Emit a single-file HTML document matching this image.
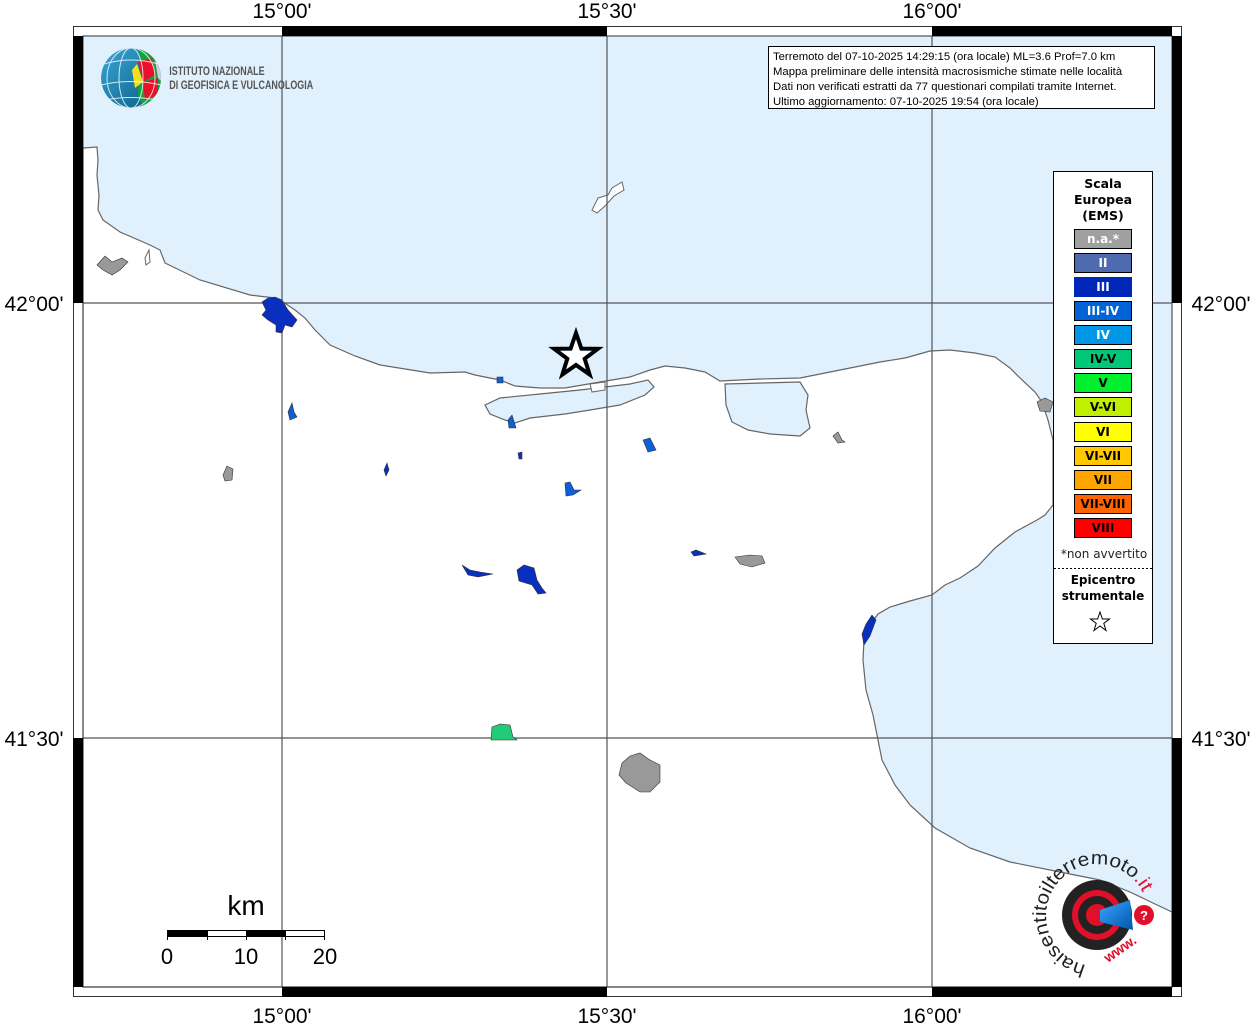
<!DOCTYPE html>
<html><head><meta charset="utf-8"><style>
html,body{margin:0;padding:0;background:#fff;}
svg{display:block;}
text{font-family:"Liberation Sans","DejaVu Sans",sans-serif;}
</style></head><body>
<svg width="1255" height="1024" viewBox="0 0 1255 1024" xmlns="http://www.w3.org/2000/svg">
<rect x="0" y="0" width="1255" height="1024" fill="#fff"/>
<rect x="83" y="36" width="1089" height="951" fill="#e0f1fd"/>
<path d="M83,148 L97,147 L98,160 L97,175 L99,195 L98,210 L103,220 L120,232 L150,245 L160,250 L165,263 L200,280 L250,295 L275,298 L283,302 L295,310 L305,318 L315,330 L330,345 L355,356 L380,365 L430,373 L465,372 L475,375 L500,380 L515,386 L540,388 L565,388 L600,382 L630,377 L650,370 L665,366 L685,368 L705,372 L720,381 L760,379 L800,378 L815,375 L840,370 L880,362 L905,358 L930,351 L950,350 L975,353 L995,357 L1010,368 L1020,378 L1035,392 L1042,402 L1048,420 L1053,440 L1053,505 L1045,515 L1037,520 L1015,532 L995,548 L978,566 L960,578 L945,585 L932,595 L910,601 L890,607 L878,614 L870,625 L864,640 L863,660 L866,690 L873,715 L882,760 L895,785 L910,805 L935,828 L970,848 L1010,862 L1060,872 L1100,880 L1130,892 L1155,904 L1172,912 L1172,987 L83,987 Z" fill="#fff" stroke="#666" stroke-width="1.2"/>
<path d="M500,398 L540,394 L580,390 L630,384 L648,380 L654,387 L645,395 L620,405 L590,410 L565,414 L530,418 L515,423 L505,420 L490,414 L485,405 Z" fill="#e0f1fd" stroke="#666" stroke-width="1.2"/>
<path d="M725,384 L800,382 L808,395 L806,410 L810,428 L800,436 L770,434 L748,430 L732,422 L726,405 Z" fill="#e0f1fd" stroke="#666" stroke-width="1.2"/>
<path d="M590,384 L605,382 L605,390 L592,392 Z" fill="#fff" stroke="#666" stroke-width="1"/>
<path d="M598,198 L608,195 L612,188 L622,182 L624,190 L614,196 L605,206 L597,213 L592,210 Z" fill="#fff" stroke="#666" stroke-width="1"/>
<path d="M145,258 L149,250 L150,262 L146,265 Z" fill="#fff" stroke="#666" stroke-width="1"/>
<g stroke="#555" stroke-width="1.2">
<line x1="282" y1="36" x2="282" y2="987"/>
<line x1="607" y1="36" x2="607" y2="987"/>
<line x1="932" y1="36" x2="932" y2="987"/>
<line x1="83" y1="303" x2="1172" y2="303"/>
<line x1="83" y1="738" x2="1172" y2="738"/>
</g>
<rect x="73.5" y="26.5" width="1108" height="970" fill="none" stroke="#333" stroke-width="1"/>
<rect x="83" y="36" width="1089" height="951" fill="none" stroke="#333" stroke-width="1"/>
<g fill="#000">
<rect x="282" y="26" width="325" height="10"/>
<rect x="932" y="26" width="240" height="10"/>
<rect x="282" y="987" width="325" height="10"/>
<rect x="932" y="987" width="240" height="10"/>
<rect x="73" y="36" width="10" height="267"/>
<rect x="73" y="738" width="10" height="249"/>
<rect x="1172" y="36" width="10" height="267"/>
<rect x="1172" y="738" width="10" height="249"/>
</g>
<g font-size="21" fill="#000" text-anchor="middle">
<text x="282" y="18">15°00'</text>
<text x="607" y="18">15°30'</text>
<text x="932" y="18">16°00'</text>
<text x="282" y="1023">15°00'</text>
<text x="607" y="1023">15°30'</text>
<text x="932" y="1023">16°00'</text>
<text x="34" y="311">42°00'</text>
<text x="34" y="746">41°30'</text>
<text x="1221" y="311">42°00'</text>
<text x="1221" y="746">41°30'</text>
</g>
<g stroke="#333" stroke-width="0.6">
<path d="M262,302 L268,298 L275,297 L282,300 L288,310 L297,320 L292,327 L285,325 L282,333 L276,332 L276,325 L268,320 L262,315 L266,310 Z" fill="#0a2fbe"/>
<path d="M97,265 L105,256 L112,262 L122,258 L128,262 L120,270 L112,275 L103,270 Z" fill="#999"/>
<path d="M288,412 L292,403 L294,412 L297,417 L290,420 Z" fill="#0d5fd6"/>
<path d="M223,475 L227,466 L233,469 L232,480 L225,481 Z" fill="#999"/>
<path d="M384,470 L387,463 L389,470 L386,476 Z" fill="#0a2fbe"/>
<path d="M497,377 L503,377 L503,383 L497,383 Z" fill="#0d5fd6"/>
<path d="M508,420 L512,415 L516,428 L509,428 Z" fill="#0d5fd6"/>
<path d="M518,453 L522,452 L522,459 L519,459 Z" fill="#0a2fbe"/>
<path d="M565,483 L570,482 L574,490 L581,490 L573,495 L566,496 Z" fill="#0d5fd6"/>
<path d="M643,440 L650,438 L656,450 L648,452 Z" fill="#0d5fd6"/>
<path d="M462,565 L470,570 L480,572 L493,574 L478,577 L468,575 Z" fill="#0a2fbe"/>
<path d="M517,570 L524,565 L534,568 L537,580 L542,588 L546,593 L538,594 L532,585 L519,581 Z" fill="#0a2fbe"/>
<path d="M691,552 L696,550 L706,554 L694,556 Z" fill="#0a2fbe"/>
<path d="M735,557 L750,555 L762,556 L765,563 L752,567 L740,564 Z" fill="#999"/>
<path d="M833,436 L838,432 L842,440 L845,442 L838,443 Z" fill="#999"/>
<path d="M1037,402 L1045,398 L1053,402 L1050,412 L1040,411 Z" fill="#999"/>
<path d="M492,727 L500,724 L510,725 L513,737 L517,740 L491,740 Z" fill="#22cc77"/>
<path d="M622,763 L630,756 L640,753 L650,760 L660,765 L660,782 L650,792 L640,792 L626,783 L619,775 Z" fill="#999"/>
<path d="M866,624 L872,615 L876,620 L870,636 L864,645 L862,634 Z" fill="#0a2fbe"/>
</g>
<path d="M576,333 L581.4,348.6 L597.9,348.8 L584.7,358.7 L589.6,374.5 L576,365 L562.4,374.5 L567.3,358.7 L554.1,348.8 L570.6,348.6 Z" fill="#fff" stroke="#000" stroke-width="4" stroke-linejoin="miter"/>
<rect x="768.5" y="46.5" width="386" height="62" fill="#fff" stroke="#000"/>
<g font-size="11.3" fill="#000">
<text x="773" y="60">Terremoto del 07-10-2025 14:29:15 (ora locale) ML=3.6 Prof=7.0 km</text>
<text x="773" y="75">Mappa preliminare delle intensità macrosismiche stimate nelle località</text>
<text x="773" y="90">Dati non verificati estratti da 77 questionari compilati tramite Internet.</text>
<text x="773" y="105">Ultimo aggiornamento: 07-10-2025 19:54 (ora locale)</text>
</g>
<defs>
<clipPath id="g"><circle cx="131" cy="78" r="30"/></clipPath>
<linearGradient id="bl" x1="0" y1="0" x2="1" y2="1"><stop offset="0" stop-color="#38a8d8"/><stop offset="1" stop-color="#0a5a80"/></linearGradient>
<linearGradient id="cone" x1="0" y1="0" x2="1" y2="1"><stop offset="0" stop-color="#3aa6ff"/><stop offset="1" stop-color="#0055aa"/></linearGradient>
<path id="arc" d="M1086,965 A51,51 0 1,1 1143,893"/>
</defs>
<g clip-path="url(#g)">
<circle cx="131" cy="78" r="30" fill="url(#bl)"/>
<path d="M140,45 L165,55 L165,100 L145,110 L138,95 Z" fill="#1aa040"/>
<path d="M138,62 L152,58 L155,75 L143,82 Z" fill="#e8102a"/>
<path d="M143,82 L158,78 L158,95 L145,100 Z" fill="#e8102a"/>
<path d="M137,64 L143,82 L135,88 L132,70 Z" fill="#f0e020"/>
<path d="M155,60 L165,65 L165,85 L158,78 Z" fill="#d8c8e0"/>
<g stroke="#fff" stroke-width="1" fill="none" opacity="0.8">
<ellipse cx="131" cy="78" rx="12" ry="30"/><ellipse cx="131" cy="78" rx="24" ry="30"/>
<path d="M101,65 Q131,55 161,65 M101,85 Q131,78 161,85 M105,100 Q131,95 157,100"/>
</g>
</g>
<g font-size="11.5" fill="#555" font-weight="bold" transform="scale(0.78,1)">
<text x="217" y="75">ISTITUTO NAZIONALE</text>
<text x="217" y="89">DI GEOFISICA E VULCANOLOGIA</text>
</g>
<rect x="1053.5" y="171.5" width="99" height="472" fill="#fff" stroke="#000"/>
<g font-size="12.5" font-weight="bold" fill="#000" text-anchor="middle">
<text x="1103" y="188" style="font-family:'DejaVu Sans',sans-serif">Scala</text>
<text x="1103" y="204" style="font-family:'DejaVu Sans',sans-serif">Europea</text>
<text x="1103" y="220" style="font-family:'DejaVu Sans',sans-serif">(EMS)</text>
</g>
<g stroke="#000" stroke-width="1">
<rect x="1074.5" y="229.5" width="57" height="19" fill="#a0a0a0"/>
<rect x="1074.5" y="253.5" width="57" height="19" fill="#4f6bb0"/>
<rect x="1074.5" y="277.5" width="57" height="19" fill="#0027b8" stroke="#0027b8"/>
<rect x="1074.5" y="301.5" width="57" height="19" fill="#0064d6"/>
<rect x="1074.5" y="325.5" width="57" height="19" fill="#0098e6"/>
<rect x="1074.5" y="349.5" width="57" height="19" fill="#00c878"/>
<rect x="1074.5" y="373.5" width="57" height="19" fill="#00f030"/>
<rect x="1074.5" y="397.5" width="57" height="19" fill="#c0f000"/>
<rect x="1074.5" y="422.5" width="57" height="19" fill="#ffff00"/>
<rect x="1074.5" y="446.5" width="57" height="19" fill="#ffc800"/>
<rect x="1074.5" y="470.5" width="57" height="19" fill="#ffa500"/>
<rect x="1074.5" y="494.5" width="57" height="19" fill="#ff6400"/>
<rect x="1074.5" y="518.5" width="57" height="19" fill="#ff0000"/>
</g>
<g font-size="12" font-weight="bold" text-anchor="middle">
<text x="1103" y="243" fill="#fff" style="font-family:'DejaVu Sans',sans-serif">n.a.*</text>
<text x="1103" y="267" fill="#fff" style="font-family:'DejaVu Sans',sans-serif">II</text>
<text x="1103" y="291" fill="#fff" style="font-family:'DejaVu Sans',sans-serif">III</text>
<text x="1103" y="315" fill="#fff" style="font-family:'DejaVu Sans',sans-serif">III-IV</text>
<text x="1103" y="339" fill="#fff" style="font-family:'DejaVu Sans',sans-serif">IV</text>
<text x="1103" y="363" fill="#000" style="font-family:'DejaVu Sans',sans-serif">IV-V</text>
<text x="1103" y="387" fill="#000" style="font-family:'DejaVu Sans',sans-serif">V</text>
<text x="1103" y="411" fill="#000" style="font-family:'DejaVu Sans',sans-serif">V-VI</text>
<text x="1103" y="436" fill="#000" style="font-family:'DejaVu Sans',sans-serif">VI</text>
<text x="1103" y="460" fill="#000" style="font-family:'DejaVu Sans',sans-serif">VI-VII</text>
<text x="1103" y="484" fill="#000" style="font-family:'DejaVu Sans',sans-serif">VII</text>
<text x="1103" y="508" fill="#000" style="font-family:'DejaVu Sans',sans-serif">VII-VIII</text>
<text x="1103" y="532" fill="#000" style="font-family:'DejaVu Sans',sans-serif">VIII</text>
</g>
<text x="1104" y="558" font-size="12" text-anchor="middle" fill="#222" style="font-family:'DejaVu Sans',sans-serif">*non avvertito</text>
<line x1="1054" y1="568.5" x2="1152" y2="568.5" stroke="#000" stroke-dasharray="2,2"/>
<text x="1103" y="584" font-size="12" font-weight="bold" text-anchor="middle" style="font-family:'DejaVu Sans',sans-serif">Epicentro</text>
<text x="1103" y="600" font-size="12" font-weight="bold" text-anchor="middle" style="font-family:'DejaVu Sans',sans-serif">strumentale</text>
<path d="M1100,612 L1102.4,619 L1109.5,619 L1103.8,623.3 L1106,630.5 L1100,626 L1094,630.5 L1096.2,623.3 L1090.5,619 L1097.6,619 Z" fill="#fff" stroke="#000" stroke-width="1"/>
<rect x="167.5" y="930.5" width="157" height="6" fill="#fff" stroke="#000"/>
<rect x="167" y="930" width="40" height="7" fill="#000"/>
<rect x="246" y="930" width="39" height="7" fill="#000"/>
<g stroke="#000"><line x1="167.5" y1="930" x2="167.5" y2="940"/><line x1="207.5" y1="930" x2="207.5" y2="940"/><line x1="246.5" y1="930" x2="246.5" y2="940"/><line x1="285.5" y1="930" x2="285.5" y2="940"/><line x1="324.5" y1="930" x2="324.5" y2="940"/></g>
<text x="246" y="915" font-size="28" text-anchor="middle">km</text>
<g font-size="22" text-anchor="middle"><text x="167" y="964">0</text><text x="246" y="964">10</text><text x="325" y="964">20</text></g>
<circle cx="1097" cy="915" r="35" fill="#222"/>
<circle cx="1097" cy="915" r="25" fill="#e0102a"/>
<circle cx="1097" cy="915" r="19" fill="#222"/>
<circle cx="1097" cy="915" r="11" fill="#e0102a"/>
<path d="M1100,910 L1130,900 L1133,930 L1100,922 Z" fill="url(#cone)"/>
<circle cx="1144" cy="915" r="10" fill="#e0102a"/>
<text x="1144" y="920" font-size="13" font-weight="bold" fill="#fff" text-anchor="middle">?</text>
<text font-size="19" fill="#222" textLength="205" lengthAdjust="spacingAndGlyphs"><textPath href="#arc">haisentitoilterremoto<tspan fill="#e0102a">.it</tspan></textPath></text>
<text x="1108" y="963" font-size="14" font-weight="bold" fill="#e0102a" transform="rotate(-35 1108 963)">www.</text>
</svg>
</body></html>
